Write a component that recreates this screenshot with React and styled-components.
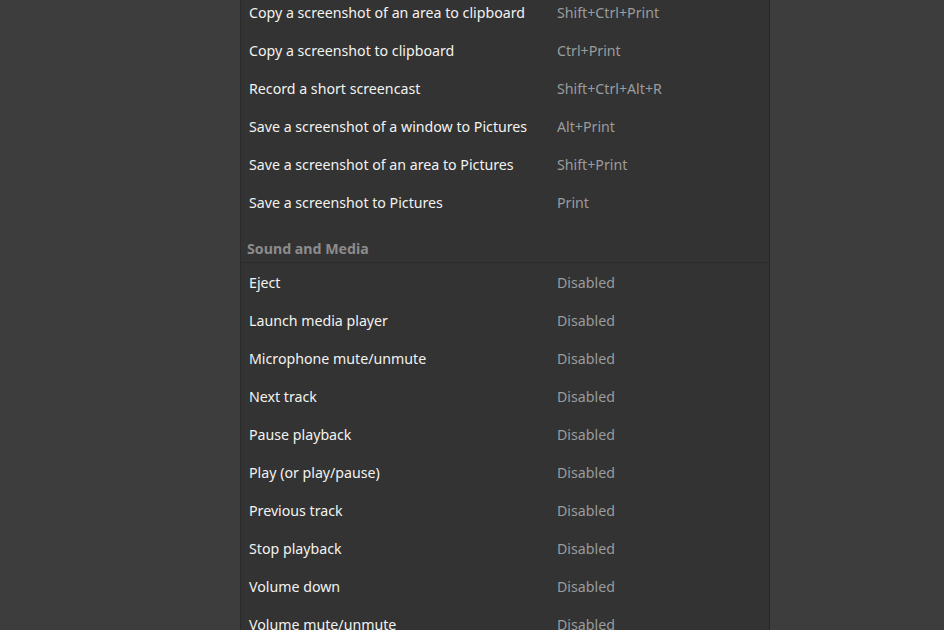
import styled, { createGlobalStyle } from "styled-components";

const GlobalStyle = createGlobalStyle`
    html, body {
        margin: 0;
        padding: 0;
        background: #3d3d3d;
        height: 100%;
        overflow: hidden;
    }
    #root {
        height: 100%;
    }
`;

const Page = styled.div`
    display: flex;
    padding-left: 240px;
    height: 630px;
    overflow: hidden;
    font-family: "Noto Sans", "Open Sans", sans-serif;
    font-size: 14.2px;
`;

const Panel = styled.div`
    width: 528px;
    background: #333333;
    border-left: 1px solid #2a2a2a;
    border-right: 1px solid #262626;
    margin-top: -7px;
`;

const Section = styled.div`
    display: flex;
    flex-direction: column;
`;

const SectionTitle = styled.div`
    padding: 20px 6px 5px;
    font-weight: 700;
    color: #8b8b8b;
    border-bottom: 1px solid #2b2b2b;
    line-height: 16px;
`;

const Row = styled.div`
    display: grid;
    grid-template-columns: 308px 1fr;
    align-items: center;
    height: 38px;
    padding-left: 8px;
`;

const Name = styled.span`
    color: #f2f2f0;
`;

const Accel = styled.span`
    color: #9a9c9e;
`;

const screenshots = [
    ["Copy a screenshot of an area to clipboard", "Shift+Ctrl+Print"],
    ["Copy a screenshot to clipboard", "Ctrl+Print"],
    ["Record a short screencast", "Shift+Ctrl+Alt+R"],
    ["Save a screenshot of a window to Pictures", "Alt+Print"],
    ["Save a screenshot of an area to Pictures", "Shift+Print"],
    ["Save a screenshot to Pictures", "Print"],
];

const media = [
    "Eject",
    "Launch media player",
    "Microphone mute/unmute",
    "Next track",
    "Pause playback",
    "Play (or play/pause)",
    "Previous track",
    "Stop playback",
    "Volume down",
    "Volume mute/unmute",
    "Volume up",
].map((name) => [name, "Disabled"]);

function ShortcutRow({ name, accel }) {
    return (
        <Row>
            <Name>{name}</Name>
            <Accel>{accel}</Accel>
        </Row>
    );
}

export default function App() {
    return (
        <>
            <GlobalStyle />
            <Page>
                <Panel>
                    <Section>
                        {screenshots.map(([n, a]) => (
                            <ShortcutRow key={n} name={n} accel={a} />
                        ))}
                    </Section>
                    <Section>
                        <SectionTitle>Sound and Media</SectionTitle>
                        {media.map(([n, a]) => (
                            <ShortcutRow key={n} name={n} accel={a} />
                        ))}
                    </Section>
                </Panel>
            </Page>
        </>
    );
}
